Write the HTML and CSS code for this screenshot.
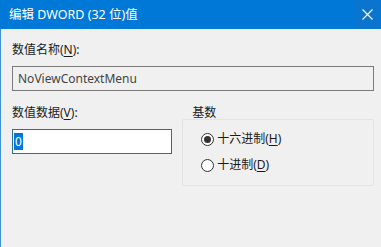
FILE: index.html
```html
<!DOCTYPE html>
<html lang="zh-CN">
<head>
	<meta charset="UTF-8">
	<title>编辑 DWORD (32 位)值</title>
	<link rel="stylesheet" href="styles.css">
</head>
<body>
	<div class="window">
		<div class="titlebar">
			<span class="title">编辑 DWORD (32 位)值</span>
			<span class="close">
				<svg width="11" height="11" viewBox="0 0 11 11"><path d="M0.5 0.5L10.5 10.5M10.5 0.5L0.5 10.5" stroke="#fff" stroke-width="1.2" fill="none"/></svg>
			</span>
		</div>
		<div class="content">
			<div class="label">数值名称(<u>N</u>):</div>
			<div class="field field-readonly">NoViewContextMenu</div>
			<div class="row">
				<div class="col-data">
					<div class="label">数值数据(<u>V</u>):</div>
					<div class="field field-focus"><span class="selected">0</span></div>
				</div>
				<div class="col-base">
					<div class="label">基数</div>
					<div class="group">
						<label class="radio"><span class="dot dot-on"></span><span>十六进制(<u>H</u>)</span></label>
						<label class="radio"><span class="dot"></span><span>十进制(<u>D</u>)</span></label>
					</div>
				</div>
			</div>
		</div>
	</div>
</body>
</html>
```

FILE: styles.css
```css
*,
*::before,
*::after {
	box-sizing: border-box;
	margin: 0;
	padding: 0;
}

html,
body {
	height: 100%;
}

body {
	font-family: "Noto Sans", "Noto Sans CJK SC", sans-serif;
	font-size: 12px;
	line-height: 16px;
	color: #1a1a1a;
	background-color: #f0f0f0;
	overflow: hidden;
}

u {
	text-decoration: underline;
	text-underline-offset: 2px;
}

.window {
	height: 100%;
	border-left: 1px solid #3d8fd6;
}

.titlebar {
	display: flex;
	align-items: center;
	justify-content: space-between;
	height: 29px;
	background-color: #0078d7;
	color: #fff;
	margin-left: -1px;
}

.title {
	padding-left: 9px;
	font-size: 12.5px;
}

.close {
	display: flex;
	align-items: center;
	justify-content: center;
	width: 25px;
	height: 29px;
	margin-right: 1px;
	background-color: #0a74cf;
}

.content {
	padding: 13px 7px 0 11px;
}

.field {
	height: 25px;
	margin-top: 8px;
	padding: 0 5px;
	line-height: 23px;
	border: 1px solid #7a7a7a;
}

.field-readonly {
	width: 362px;
	color: #444;
	background-color: #f0f0f0;
}

.row {
	display: flex;
	gap: 10px;
	margin-top: 14px;
}

.col-data {
	width: 162px;
}

.field-focus {
	margin-top: 8px;
	padding: 3px 1px;
	line-height: 17px;
	background-color: #fff;
	border-color: #2f6f8f;
}

.selected {
	display: inline-block;
	width: 9px;
	height: 17px;
	text-align: center;
	color: #fff;
	background-color: #0078d7;
}

.col-base {
	width: 194px;
}

.col-base .label {
	padding-left: 10px;
}

.group {
	display: flex;
	flex-direction: column;
	gap: 10px;
	height: 67px;
	margin-top: -2px;
	padding: 11px 0 0 18px;
	border: 1px solid #e3e3e3;
	border-radius: 2px;
}

.radio {
	display: flex;
	align-items: center;
	gap: 3px;
}

.dot {
	position: relative;
	width: 13px;
	height: 13px;
	border: 1px solid #333;
	border-radius: 50%;
	background-color: #fff;
}

.dot-on::after {
	content: "";
	position: absolute;
	left: 2px;
	top: 2px;
	width: 7px;
	height: 7px;
	border-radius: 50%;
	background-color: #333;
}
```
